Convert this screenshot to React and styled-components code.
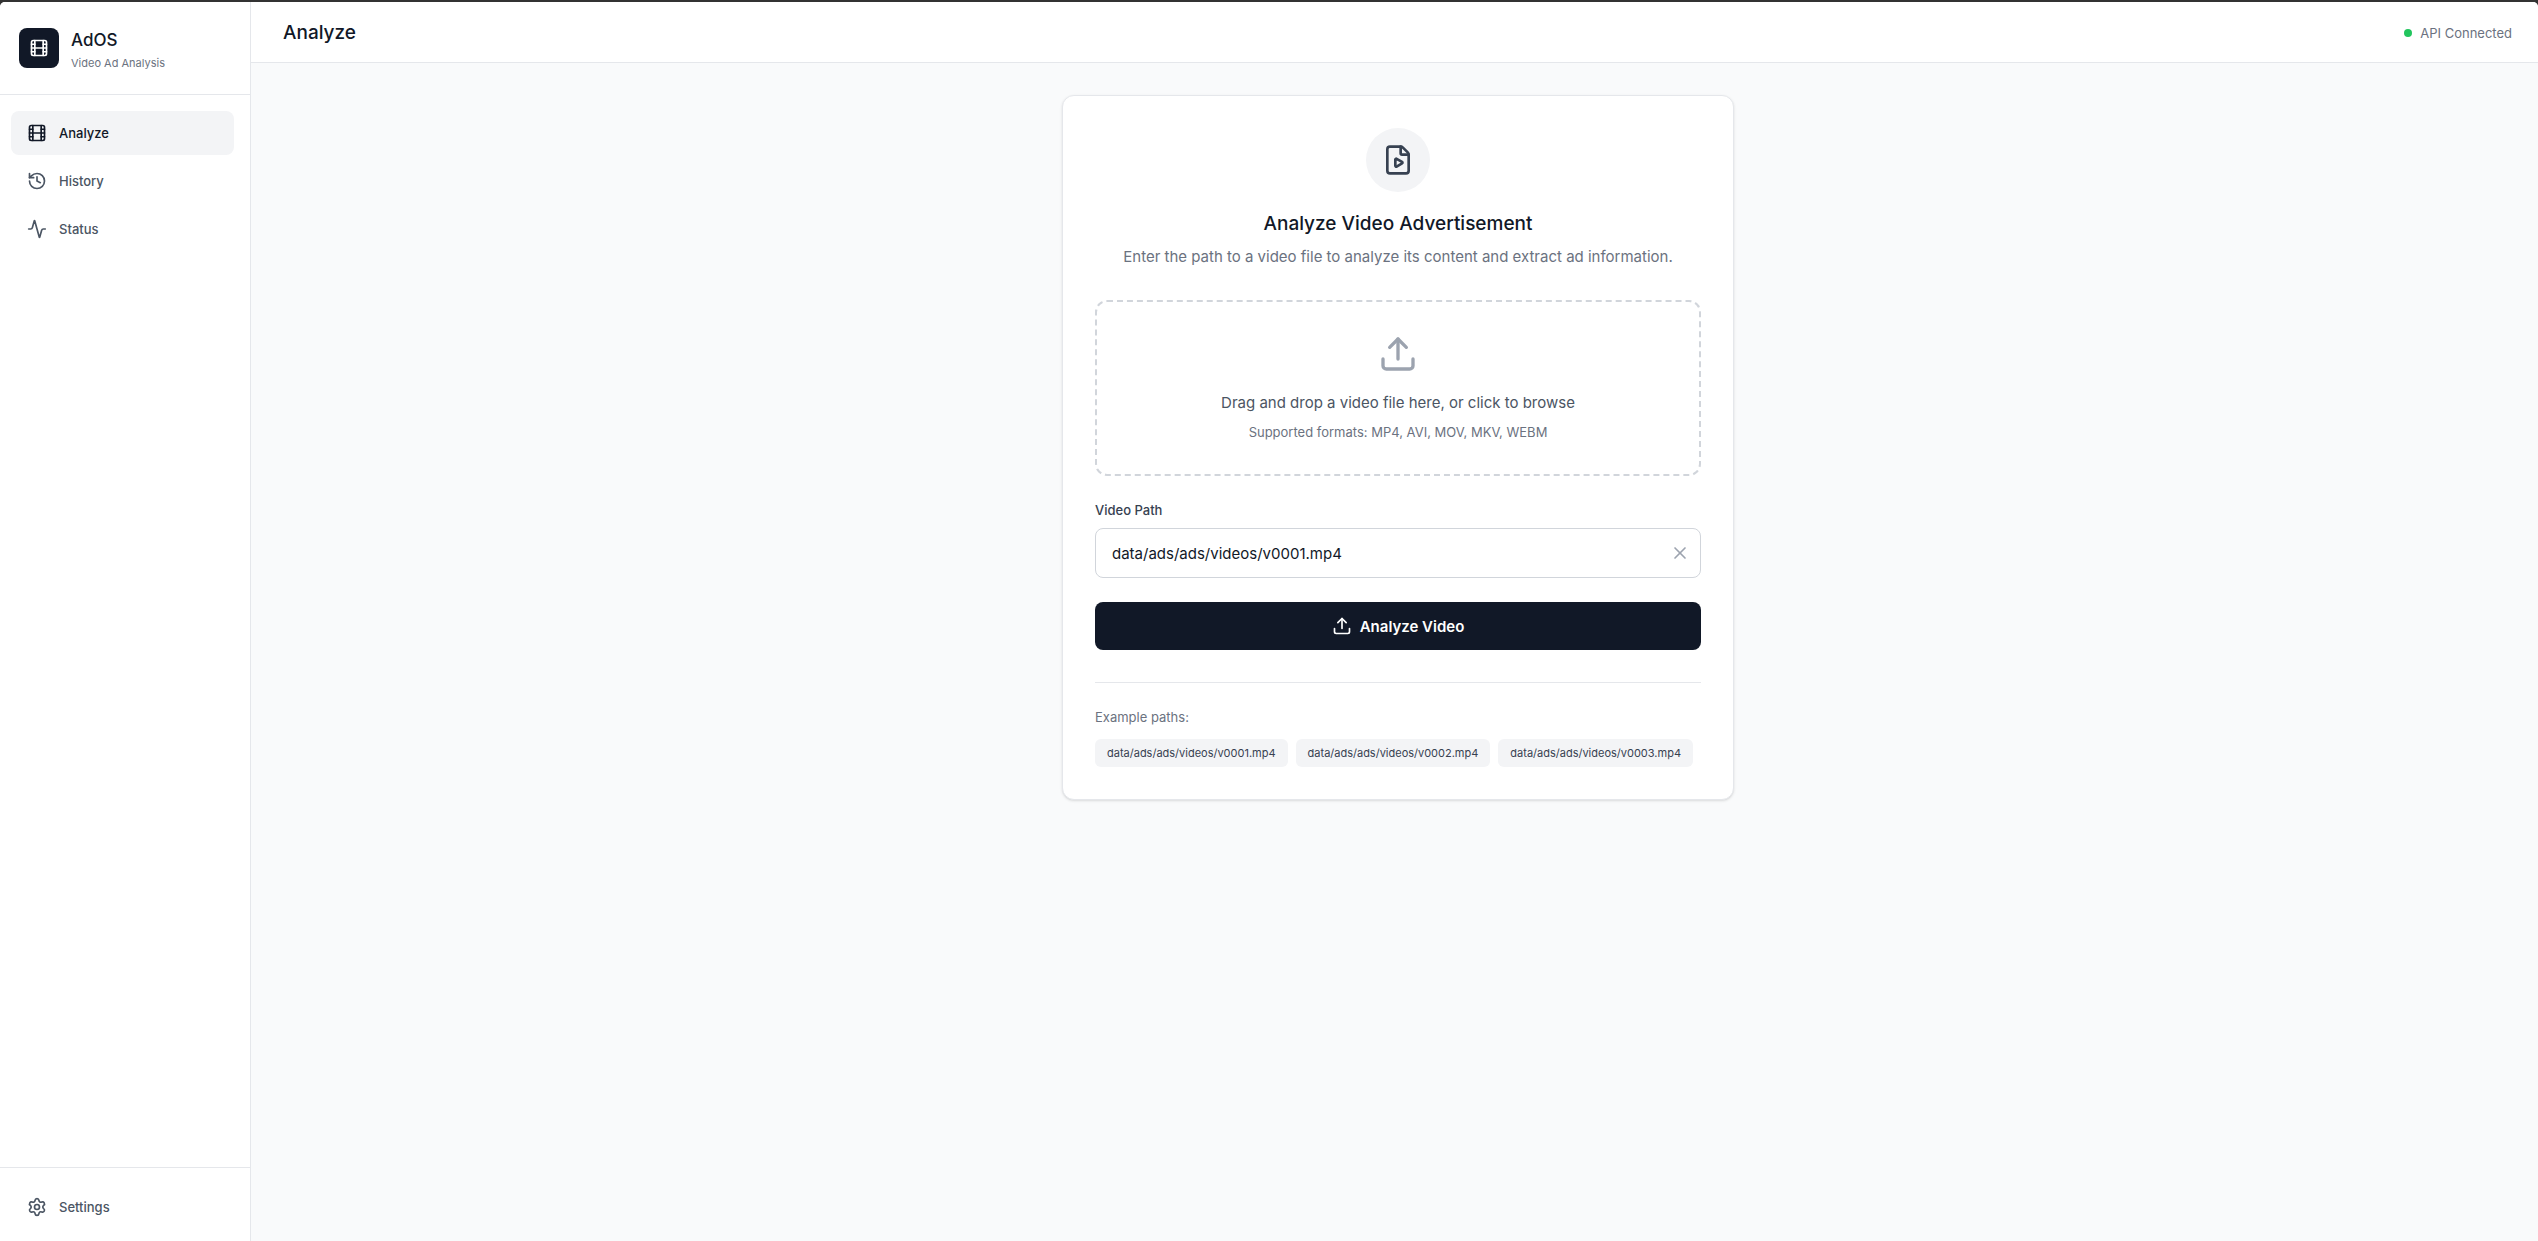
import React from 'react';
import styled, {createGlobalStyle} from 'styled-components';
import {Film, History, Activity, Settings, FilePlay, Upload, X} from 'lucide-react';

const GlobalStyle = createGlobalStyle`
    html, body {
        margin: 0;
        padding: 0;
        height: 100%;
    }
    body {
        font-family: Inter, "Noto Sans", sans-serif;
        background: #f9fafb;
        color: #111827;
    }
    * {
        box-sizing: border-box;
    }
`;

const Page = styled.div`
    display: flex;
    flex-direction: column;
    height: 1241px;
    padding-top: 2px;
    overflow: hidden;
    background: #333333;
`;

const Layout = styled.div`
    display: flex;
    flex: 1;
    min-height: 0;
    overflow: hidden;
    background: #f9fafb;
    border-radius: 5px 5px 0 0;
`;

const Sidebar = styled.aside`
    display: flex;
    flex-direction: column;
    width: 251px;
    flex-shrink: 0;
    background: #ffffff;
    border-right: 1px solid #e5e7eb;
`;

const Brand = styled.div`
    display: flex;
    align-items: center;
    gap: 12px;
    height: 93px;
    padding: 0 19px;
    border-bottom: 1px solid #e5e7eb;
`;

const LogoMark = styled.div`
    display: flex;
    align-items: center;
    justify-content: center;
    width: 40px;
    height: 40px;
    border-radius: 8px;
    background: #111827;
    color: #ffffff;
`;

const BrandName = styled.div`
    padding-top: 3px;
    font-size: 17px;
    line-height: 24px;
    font-weight: 500;
    color: #111827;
`;

const BrandSub = styled.div`
    margin-top: 3px;
    font-size: 11px;
    line-height: 16px;
    color: #6b7280;
`;

const Nav = styled.nav`
    display: flex;
    flex-direction: column;
    gap: 4px;
    flex: 1;
    padding: 16px 16px 0 11px;
`;

const NavItem = styled.a`
    display: flex;
    align-items: center;
    gap: 12px;
    height: 44px;
    padding: 0 16px;
    border-radius: 8px;
    font-size: 13px;
    font-weight: 500;
    color: ${props => props.$active ? '#111827' : '#4b5563'};
    background: ${props => props.$active ? '#f3f4f6' : 'transparent'};
`;

const SidebarFoot = styled.div`
    padding: 17px 16px 12px 11px;
    border-top: 1px solid #e5e7eb;
`;

const Main = styled.div`
    display: flex;
    flex-direction: column;
    flex: 1;
    min-width: 0;
`;

const Header = styled.header`
    display: flex;
    align-items: center;
    justify-content: space-between;
    height: 61px;
    padding: 1px 26px 0 32px;
    background: #ffffff;
    border-bottom: 1px solid #e5e7eb;
`;

const Title = styled.h1`
    margin: 0;
    font-size: 19px;
    font-weight: 500;
    color: #111827;
`;

const ApiStatus = styled.div`
    display: flex;
    align-items: center;
    gap: 8px;
    font-size: 13px;
    color: #6b7280;
`;

const Dot = styled.span`
    width: 8px;
    height: 8px;
    border-radius: 50%;
    background: #22c55e;
`;

const Content = styled.main`
    display: flex;
    justify-content: center;
    align-items: flex-start;
    flex: 1;
    padding: 32px 0 32px 7px;
`;

const Card = styled.section`
    width: 672px;
    padding: 32px;
    background: #ffffff;
    border: 1px solid #e5e7eb;
    border-radius: 12px;
    box-shadow: 0 1px 3px rgba(0, 0, 0, 0.1), 0 1px 2px -1px rgba(0, 0, 0, 0.1);
`;

const IconCircle = styled.div`
    display: flex;
    align-items: center;
    justify-content: center;
    width: 64px;
    height: 64px;
    margin: 0 auto 18px;
    border-radius: 50%;
    background: #f3f4f6;
    color: #374151;
`;

const CardTitle = styled.h2`
    margin: 0 0 8px;
    text-align: center;
    font-size: 19px;
    line-height: 28px;
    font-weight: 500;
    color: #111827;
`;

const CardText = styled.p`
    margin: 0 0 32px;
    text-align: center;
    font-size: 15px;
    line-height: 22px;
    color: #6b7280;
`;

const DropZone = styled.div`
    display: flex;
    flex-direction: column;
    align-items: center;
    height: 176px;
    padding-top: 32px;
    margin-bottom: 24px;
    border: 2px dashed #d1d5db;
    border-radius: 12px;
    color: #9ca3af;
`;

const DropText = styled.p`
    margin: 18px 0 9px;
    font-size: 15px;
    line-height: 22px;
    color: #4b5563;
`;

const DropHint = styled.p`
    margin: 0;
    font-size: 13px;
    line-height: 18px;
    color: #6b7280;
`;

const Label = styled.label`
    display: block;
    margin-bottom: 8px;
    font-size: 13px;
    line-height: 20px;
    font-weight: 500;
    color: #374151;
`;

const InputWrap = styled.div`
    position: relative;
    margin-bottom: 24px;
`;

const PathInput = styled.input`
    display: block;
    width: 100%;
    height: 50px;
    padding: 0 48px 0 16px;
    font-family: inherit;
    font-size: 15px;
    color: #111827;
    background: #ffffff;
    border: 1px solid #d1d5db;
    border-radius: 8px;
    outline: none;
`;

const ClearButton = styled.span`
    position: absolute;
    top: 15px;
    right: 11px;
    display: flex;
    color: #9ca3af;
`;

const AnalyzeButton = styled.button`
    display: flex;
    align-items: center;
    justify-content: center;
    gap: 8px;
    width: 100%;
    height: 48px;
    font-family: inherit;
    font-size: 15px;
    font-weight: 600;
    color: #ffffff;
    background: #111827;
    border: none;
    border-radius: 8px;
`;

const Examples = styled.div`
    margin-top: 32px;
    padding-top: 24px;
    border-top: 1px solid #e5e7eb;
`;

const ExamplesLabel = styled.div`
    margin-bottom: 12px;
    font-size: 13px;
    line-height: 20px;
    color: #6b7280;
`;

const Chips = styled.div`
    display: flex;
    gap: 8px;
`;

const Chip = styled.button`
    height: 28px;
    padding: 0 12px;
    font-family: inherit;
    font-size: 11px;
    color: #374151;
    background: #f3f4f6;
    border: none;
    border-radius: 6px;
    white-space: nowrap;
`;

const navLinks = [
    {label: 'Analyze', icon: Film, active: true},
    {label: 'History', icon: History},
    {label: 'Status', icon: Activity},
];

const examples = [
    'data/ads/ads/videos/v0001.mp4',
    'data/ads/ads/videos/v0002.mp4',
    'data/ads/ads/videos/v0003.mp4',
];

export default function App() {
    return (
        <Page>
            <GlobalStyle />
            <Layout>
                <Sidebar>
                    <Brand>
                        <LogoMark><Film size={20} /></LogoMark>
                        <div>
                            <BrandName>AdOS</BrandName>
                            <BrandSub>Video Ad Analysis</BrandSub>
                        </div>
                    </Brand>
                    <Nav>
                        {navLinks.map(({label, icon: Icon, active}) => (
                            <NavItem key={label} $active={active}>
                                <Icon size={20} />
                                {label}
                            </NavItem>
                        ))}
                    </Nav>
                    <SidebarFoot>
                        <NavItem><Settings size={20} />Settings</NavItem>
                    </SidebarFoot>
                </Sidebar>
                <Main>
                    <Header>
                        <Title>Analyze</Title>
                        <ApiStatus><Dot />API Connected</ApiStatus>
                    </Header>
                    <Content>
                        <Card>
                            <IconCircle><FilePlay size={32} /></IconCircle>
                            <CardTitle>Analyze Video Advertisement</CardTitle>
                            <CardText>Enter the path to a video file to analyze its content and extract ad information.</CardText>
                            <DropZone>
                                <Upload size={40} />
                                <DropText>Drag and drop a video file here, or click to browse</DropText>
                                <DropHint>Supported formats: MP4, AVI, MOV, MKV, WEBM</DropHint>
                            </DropZone>
                            <Label>Video Path</Label>
                            <InputWrap>
                                <PathInput readOnly value="data/ads/ads/videos/v0001.mp4" />
                                <ClearButton><X size={20} /></ClearButton>
                            </InputWrap>
                            <AnalyzeButton><Upload size={20} />Analyze Video</AnalyzeButton>
                            <Examples>
                                <ExamplesLabel>Example paths:</ExamplesLabel>
                                <Chips>
                                    {examples.map(path => <Chip key={path}>{path}</Chip>)}
                                </Chips>
                            </Examples>
                        </Card>
                    </Content>
                </Main>
            </Layout>
        </Page>
    );
}
